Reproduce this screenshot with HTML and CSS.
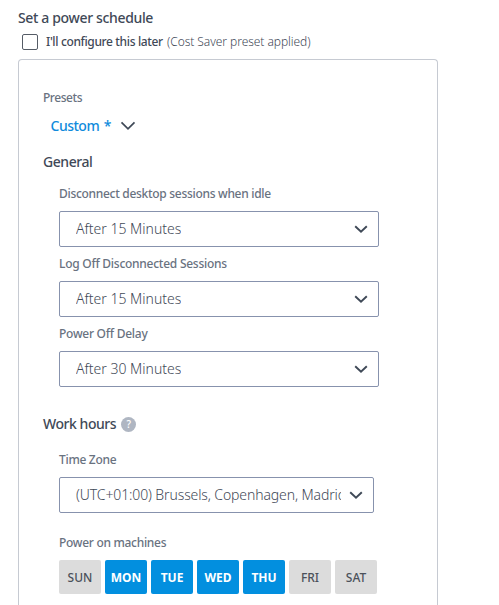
FILE: index.html
```html
<!DOCTYPE html>
<html lang="en">
<head>
<meta charset="utf-8">
<title>Power schedule</title>
<link rel="stylesheet" href="styles.css">
</head>
<body>
<h1 class="title">Set a power schedule</h1>
<label class="later"><span class="box"></span><span class="later-text">I'll configure this later</span><span class="hint">(Cost Saver preset applied)</span></label>
<main class="panel">
  <div class="label presets-label">Presets</div>
  <div class="preset"><span class="preset-name">Custom *</span><svg class="chev-lg" viewBox="0 0 16 10"><path d="M1.500 1.300 8 7.800 14.500 1.300"/></svg></div>
  <h2 class="section general"><span>General</span></h2>
  <div class="fields">
    <div class="label idle">Disconnect desktop sessions when idle</div>
    <div class="select"><span class="value">After 15 Minutes</span><svg class="chev" viewBox="0 0 14 9"><path d="M1.200 1.200 7 6.800 12.800 1.200"/></svg></div>
    <div class="label logoff">Log Off Disconnected Sessions</div>
    <div class="select"><span class="value">After 15 Minutes</span><svg class="chev" viewBox="0 0 14 9"><path d="M1.200 1.200 7 6.800 12.800 1.200"/></svg></div>
    <div class="label delay">Power Off Delay</div>
    <div class="select"><span class="value">After 30 Minutes</span><svg class="chev" viewBox="0 0 14 9"><path d="M1.200 1.200 7 6.800 12.800 1.200"/></svg></div>
  </div>
  <h2 class="section work"><span>Work hours</span><span class="help">?</span></h2>
  <div class="fields">
    <div class="label zone">Time Zone</div>
    <div class="select timezone"><span class="value">(UTC+01:00) Brussels, Copenhagen, Madrid</span><svg class="chev" viewBox="0 0 14 9"><path d="M1.200 1.200 7 6.800 12.800 1.200"/></svg></div>
    <div class="label machines">Power on machines</div>
    <div class="days">
      <span class="day">SUN</span><span class="day on">MON</span><span class="day on">TUE</span><span class="day on">WED</span><span class="day on">THU</span><span class="day">FRI</span><span class="day">SAT</span>
    </div>
  </div>
</main>
</body>
</html>
```

FILE: styles.css
```css
* { box-sizing: border-box; }
html { background: #fff; }
body {
  margin: 0;
  padding: 8px 0 0 18px;
  height: 605px;
  font-family: "Noto Sans", "Open Sans", sans-serif;
  color: #3f4957;
  white-space: nowrap;
}
.title { margin: 0; height: 20px; font-size: 14px; line-height: 20px; font-weight: 500; letter-spacing: -0.35px; }
.later { display: flex; align-items: center; height: 16px; margin: 6px 0 0 4px; font-size: 12px; line-height: 16px; }
.box { width: 16px; height: 16px; border: 1px solid #555c66; border-radius: 2px; }
.later-text { margin-left: 8px; width: 117px; font-weight: 500; letter-spacing: -0.36px; }
.hint { margin-left: 4px; font-weight: 300; letter-spacing: -0.06px; }
.panel { width: 420px; height: 546px; margin-top: 9px; padding: 28px 24px 0; border: 1px solid #c6cad2; border-bottom: 0; border-radius: 4px 4px 0 0; }
.label { height: 20px; font-size: 12px; line-height: 20px; font-weight: 500; color: #69727f; letter-spacing: -0.3px; }
.presets-label { letter-spacing: -0.45px; }
.preset { display: flex; align-items: center; height: 20px; margin: 8px 0 0 7.5px; color: #108bdc; font-size: 14px; line-height: 20px; font-weight: 500; letter-spacing: -0.5px; word-spacing: 1.5px; }
.preset-name { width: 61px; }
svg { fill: none; stroke: #3f4957; flex: none; }
.chev-lg { width: 16px; height: 10px; margin-left: 8px; stroke-width: 1.700; }
.section { display: flex; align-items: center; height: 20px; font-size: 14px; line-height: 20px; font-weight: 500; letter-spacing: -0.45px; }
.general { margin: 16px 0 0; }
.fields { padding-left: 16px; }
.idle { margin: 12px 0 7px; }
.logoff, .delay { margin: 7px 0; letter-spacing: -0.26px; }
.select { display: flex; align-items: center; justify-content: space-between; width: 320px; height: 36px; padding: 0 10px 0 16px; border: 1px solid #8792ad; border-radius: 2px; }
.value { overflow: hidden; font-size: 14px; line-height: 20px; font-weight: 350; letter-spacing: 0; }
.chev { width: 14px; height: 9px; stroke-width: 1.900; }
.work { margin: 27px 0 0; }
.help { display: flex; align-items: center; justify-content: center; width: 15px; height: 15px; margin-left: 5px; border-radius: 50%; background: #afb6c2; color: #fff; font-size: 10px; line-height: 15px; letter-spacing: 0; }
.zone { margin: 16px 0 7px; }
.timezone { width: 315px; }
.timezone .value { width: 265px; letter-spacing: -0.12px; }
.machines { margin: 20px 0 7px; }
.days { display: flex; gap: 4px; }
.day { width: 42px; height: 34px; border-radius: 2px; background: #dcdcdc; color: #4b515a; font-size: 12px; line-height: 35px; font-weight: 500; text-align: center; }
.on { background: #028fdf; color: #fff; font-weight: 700; }
```
